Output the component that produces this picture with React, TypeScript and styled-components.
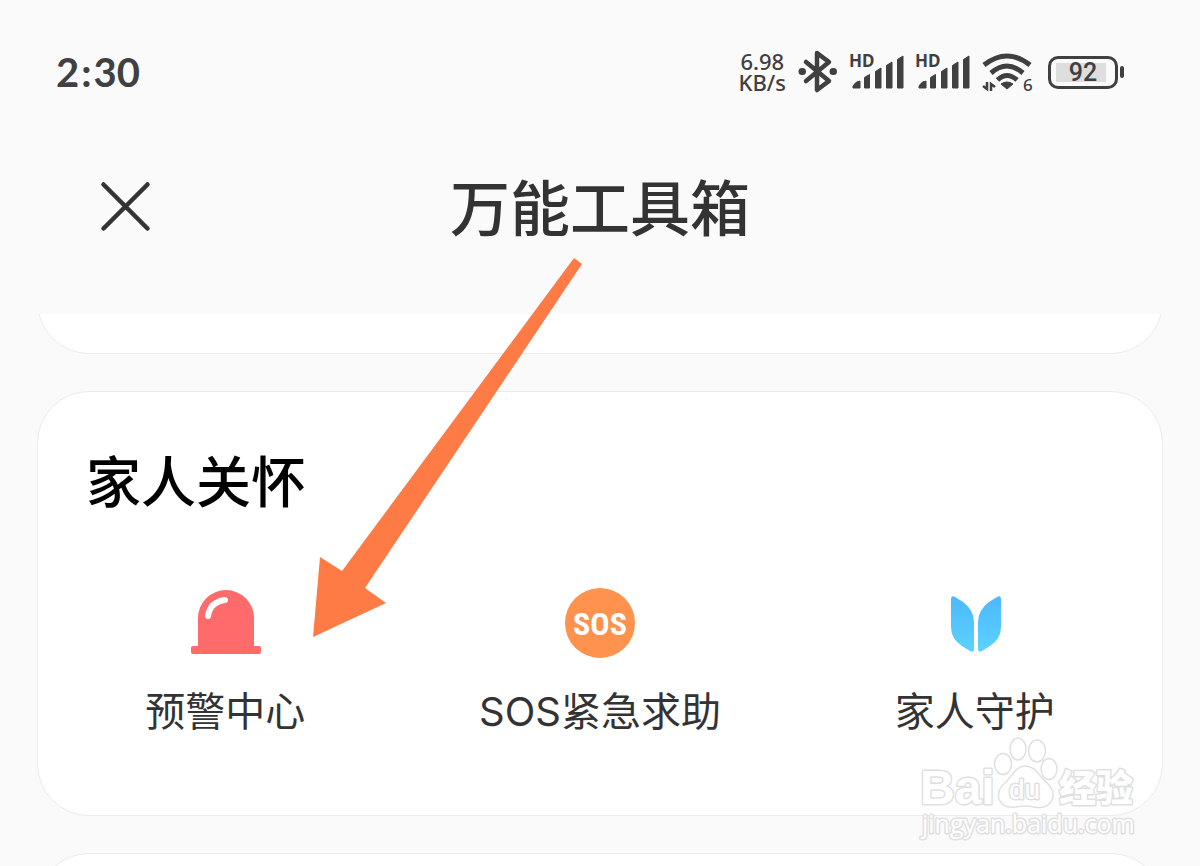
import React from 'react';
import styled, { createGlobalStyle } from 'styled-components';

const GlobalStyle = createGlobalStyle`
  * { box-sizing: border-box; }
  body { margin: 0; background: #fafafa; }
`;

const sans = `"Noto Sans CJK SC", sans-serif`;

const Screen = styled.div`
  position: relative;
  display: flex;
  flex-direction: column;
  height: 100vh;
  overflow: hidden;
  background: #fafafa;
  color: #333;
  font-family: Inter, ${sans};
`;

const StatusBar = styled.div`
  display: flex;
  align-items: center;
  justify-content: space-between;
  height: 144px;
  padding: 0 76px 0 56px;
  color: #404040;
`;

const Time = styled.time`
  display: flex;
  gap: 2px;
  font-family: Lato, sans-serif;
  font-size: 40px;
  line-height: 48px;
  font-weight: 700;
`;

const Indicators = styled.div`
  display: flex;
  align-items: center;
  gap: 12px;
`;

const Speed = styled.div`
  display: flex;
  flex-direction: column;
  align-items: center;
  font-family: "Noto Sans", sans-serif;
  font-size: 22px;
  line-height: 21px;
  font-weight: 500;
`;

const StatusIcon = styled.svg`
  display: block;
  flex: none;
`;

const HdText = styled.text`
  font-family: "Noto Sans", sans-serif;
  font-size: 17px;
  font-weight: 700;
`;

const SixText = styled.text`
  font-family: "Noto Sans", sans-serif;
  font-size: 17px;
  font-weight: 500;
`;

const Battery = styled.div`
  display: flex;
  align-items: center;
  gap: 2px;
  padding-left: 2px;
`;

const BatteryShell = styled.div`
  width: 70px;
  height: 33px;
  padding: 4px 5px;
  border: 3px solid #404040;
  border-radius: 10px;
`;

const BatteryLevel = styled.div`
  display: flex;
  align-items: center;
  justify-content: center;
  height: 19px;
  width: 50px;
  padding: 2px 0 0 4px;
  background: #dedede;
  font-family: Roboto, sans-serif;
  font-size: 25px;
  line-height: 30px;
  font-weight: 500;
`;

const BatteryCap = styled.div`
  width: 4px;
  height: 12px;
  border-radius: 2px;
  background: #404040;
`;

const TitleBar = styled.header`
  display: grid;
  grid-template-columns: 100px 1fr 100px;
  align-items: center;
  height: 170px;
  padding: 0 76px 44px;
`;

const CloseButton = styled.button`
  display: grid;
  place-items: center;
  width: 100px;
  height: 100px;
  padding: 0;
  border: 0;
  background: none;
  color: #333;
`;

const Title = styled.h1`
  margin: 0;
  padding-bottom: 4px;
  text-align: center;
  font-family: ${sans};
  font-size: 60px;
  line-height: 80px;
  font-weight: 500;
`;

const Content = styled.main`
  display: flex;
  flex: 1;
  flex-direction: column;
  gap: 37px;
  min-height: 0;
  padding: 0 37px;
  overflow: hidden;
`;

const Card = styled.section`
  flex: none;
  border: 1px solid #ebebeb;
  border-radius: 52px;
  background: #fff;
`;

const PreviousCard = styled(Card)`
  height: 120px;
  margin-top: -80px;
`;

const NextCard = styled(Card)`
  height: 425px;
`;

const CareCard = styled(Card)`
  padding: 46px 0 73px;
`;

const CardTitle = styled.h2`
  margin: 0 0 62px;
  padding-left: 48px;
  color: #000;
  font-family: ${sans};
  font-size: 55px;
  line-height: 80px;
  font-weight: 500;
`;

const Tools = styled.div`
  display: grid;
  grid-template-columns: repeat(3, 1fr);
`;

const Tool = styled.button`
  display: flex;
  flex-direction: column;
  align-items: center;
  gap: 22px;
  padding: 0;
  border: 0;
  background: none;
  color: #333;
  font-family: Inter, ${sans};
  font-size: 40px;
  line-height: 60px;
`;

const ToolIcon = styled.svg`
  display: block;
  width: 80px;
  height: 80px;
`;

const SosText = styled.text`
  font-family: "Roboto Condensed", Roboto, sans-serif;
  font-size: 32px;
  font-weight: 700;
`;

const Pointer = styled.svg`
  position: absolute;
  left: 312px;
  top: 257px;
  pointer-events: none;
`;

const Watermark = styled.svg`
  position: absolute;
  right: 60px;
  top: 732px;
  pointer-events: none;
`;

const MarkText = styled.text<{ $size: number; $family: string; $weight: number }>`
  font-family: ${(p) => p.$family};
  font-size: ${(p) => p.$size}px;
  font-weight: ${(p) => p.$weight};
  paint-order: stroke;
  stroke-width: 3;
`;

function SignalBars() {
  return (
    <StatusIcon width="54" height="48" viewBox="0 0 54 48" fill="currentColor">
      <HdText x="-1" y="19">HD</HdText>
      <path
        d="M3 40v-2q3-5 7-5v7zM14.500 29.500l5-3v13.500h-5zM25.500 23.500l5.500-3.500v20h-5.500zM36.500 17.500l5.500-3.500v26h-5.500zM47.500 11.500l5.500-3.500v32h-5.500z"
        stroke="currentColor"
        strokeLinejoin="round"
      />
    </StatusIcon>
  );
}

function Paw() {
  return (
    <g fill="#fff" strokeWidth="1.500">
      <ellipse cx="88" cy="32" rx="8.500" ry="10.500" />
      <ellipse cx="103" cy="17" rx="8" ry="11" />
      <ellipse cx="122" cy="19" rx="8.500" ry="11" />
      <ellipse cx="134" cy="37" rx="8" ry="10.500" />
      <path d="M110 34C101 34 97 44 91 50C85 55 82 60 84 67C87 75 94 76 101 75Q110 73 119 75C128 77 136 74 138 65C139 57 134 53 129 48C123 42 120 34 110 34Z" />
    </g>
  );
}

export default function App() {
  return (
    <>
      <GlobalStyle />
      <Screen>
        <StatusBar>
          <Time><span>2</span><span>:</span><span>30</span></Time>
          <Indicators>
            <Speed><span>6.98</span><span>KB/s</span></Speed>
            <StatusIcon width="40" height="44" viewBox="0 0 40 44" fill="none" stroke="currentColor" strokeWidth="4.500" strokeLinejoin="round" strokeLinecap="round">
              <path d="M8 12l23 19-12 9V3l12 9L8 31" />
              <path d="M4 21.500h.500M35 21.500h.500" strokeWidth="7" />
            </StatusIcon>
            <SignalBars />
            <SignalBars />
            <StatusIcon width="52" height="52" viewBox="0 0 52 52" fill="none" stroke="currentColor" strokeWidth="5">
              <path d="M2 19Q25 1 48 19M9 27Q25 13 41 27M15.500 34Q25 25 35 34" />
              <path d="M19 38q6-4 12 0l-6 5z" fill="currentColor" stroke="currentColor" strokeWidth="1" strokeLinejoin="round" />
              <path d="M1 40l4 3V36M9 45V38l4 3" strokeWidth="2.500" />
              <SixText x="41" y="45" fill="currentColor" stroke="none">6</SixText>
            </StatusIcon>
            <Battery>
              <BatteryShell><BatteryLevel>92</BatteryLevel></BatteryShell>
              <BatteryCap />
            </Battery>
          </Indicators>
        </StatusBar>
        <TitleBar>
          <CloseButton aria-label="关闭">
            <svg width="52" height="52" viewBox="0 0 52 52" fill="none" stroke="currentColor" strokeWidth="4.500" strokeLinecap="round">
              <path d="M3.500 3.500l44 44M47.500 3.500L3.500 47.500" />
            </svg>
          </CloseButton>
          <Title>万能工具箱</Title>
        </TitleBar>
        <Content>
          <PreviousCard />
          <CareCard>
            <CardTitle>家人关怀</CardTitle>
            <Tools>
              <Tool>
                <ToolIcon viewBox="0 0 80 80">
                  <path d="M13 66V38a28 28 0 0 1 56 0v28h5a2 2 0 0 1 2 2v4a2 2 0 0 1-2 2H8a2 2 0 0 1-2-2v-4a2 2 0 0 1 2-2z" fill="#ff6b6b" />
                  <path d="M23 36q2-14 17-16" fill="none" stroke="#fff" strokeWidth="6" strokeLinecap="round" />
                </ToolIcon>
                预警中心
              </Tool>
              <Tool>
                <ToolIcon viewBox="0 0 80 80">
                  <circle cx="40" cy="43" r="35" fill="#ff924d" />
                  <SosText x="40" y="55" textAnchor="middle" fill="#fff">SOS</SosText>
                </ToolIcon>
                SOS紧急求助
              </Tool>
              <Tool>
                <ToolIcon viewBox="0 0 80 80">
                  <defs>
                    <linearGradient id="wing" x1="0" y1="0" x2="0" y2="1">
                      <stop offset="0" stopColor="#4db8ff" />
                      <stop offset="1" stopColor="#5bd3ff" />
                    </linearGradient>
                  </defs>
                  <path d="M16 19q0-4 4-2l8 5q11 8 11 20v27q0 4-4 2l-8-5q-11-7-11-19z" fill="url(#wing)" />
                  <path d="M66 19q0-4-4-2l-8 5q-11 8-11 20v27q0 4 4 2l8-5q11-7 11-19z" fill="url(#wing)" />
                </ToolIcon>
                家人守护
              </Tool>
            </Tools>
          </CareCard>
          <NextCard />
        </Content>
        <Pointer width="272" height="382" viewBox="0 0 272 382" aria-hidden="true">
          <path d="M1 380L8 300L30 314L262 1L270 7L53 331L74 346Z" fill="#ff7b46" />
        </Pointer>
        <Watermark width="225" height="120" viewBox="0 0 225 120" fill="#fff" stroke="#e0e0e0" strokeLinejoin="round">
          <MarkText x="5" y="72" $size={48} $weight={700} $family={'"Liberation Sans", sans-serif'}>Bai</MarkText>
          <Paw />
          <MarkText x="94" y="67" $size={28} $weight={400} $family={'"Liberation Sans", sans-serif'}>du</MarkText>
          <MarkText x="144" y="70" $size={37} $weight={900} $family={sans}>经验</MarkText>
          <MarkText x="7" y="101" $size={25} $weight={400} $family={'"Open Sans", "Noto Sans", sans-serif'}>jingyan.baidu.com</MarkText>
        </Watermark>
      </Screen>
    </>
  );
}
